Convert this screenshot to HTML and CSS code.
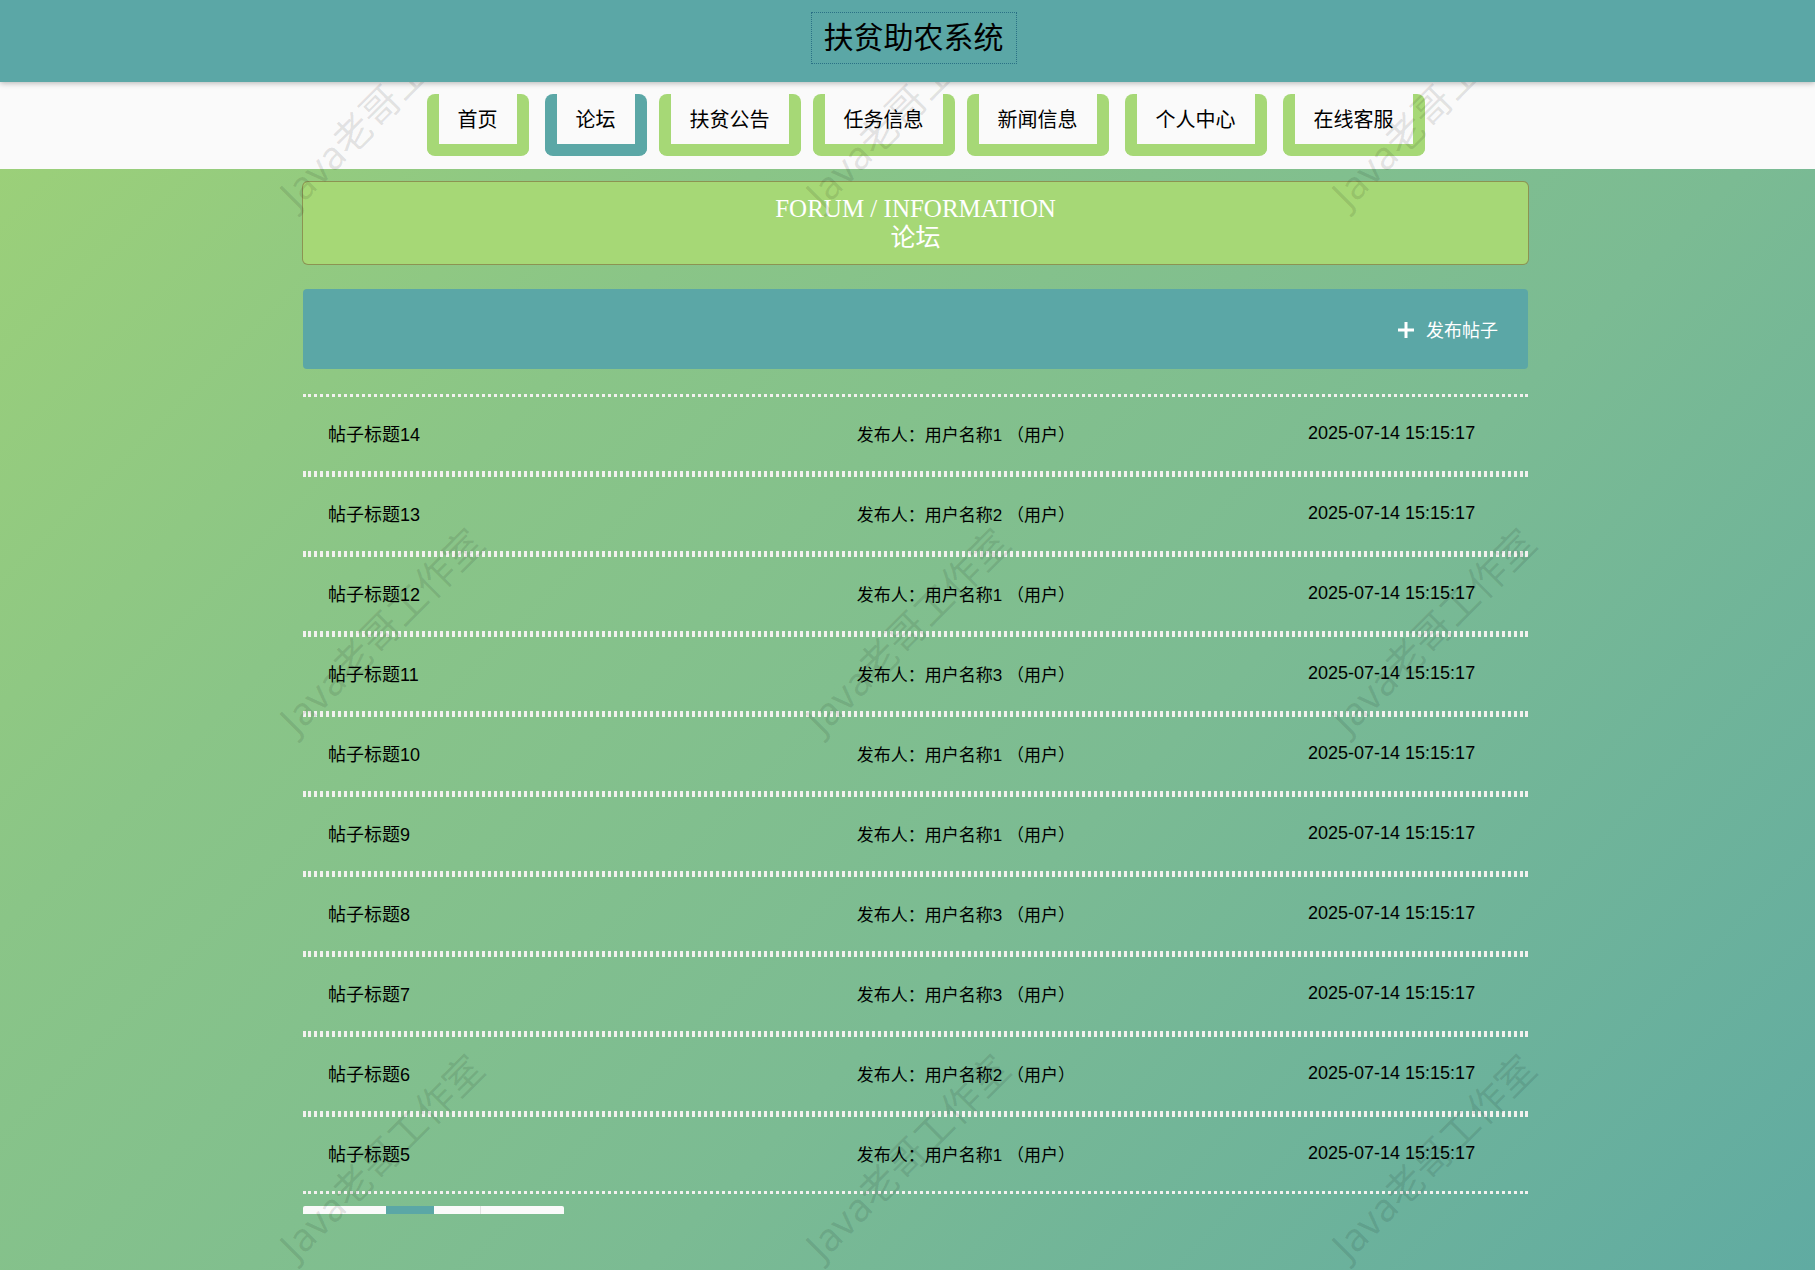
FILE: index.html
```html
<!DOCTYPE html>
<html lang="zh-CN">
<head>
    <meta charset="UTF-8">
    <meta name="viewport" content="width=device-width, initial-scale=1.0">
    <title>论坛</title>
    <link rel="stylesheet" href="styles.css">
</head>
<body>
    <header class="header">
        <h1>扶贫助农系统</h1>
    </header>
    <nav class="navbar">
        <a href="#">首页</a>
        <a href="#" class="active spaced">论坛</a>
        <a href="#">扶贫公告</a>
        <a href="#">任务信息</a>
        <a href="#">新闻信息</a>
        <a href="#" class="spaced">个人中心</a>
        <a href="#" class="spaced">在线客服</a>
    </nav>

    <main class="container">
        <div class="banner">
            <h2>FORUM / INFORMATION<br>论坛</h2>
        </div>

        <div class="toolbar">
            <button type="button" class="btn-add">
                <svg width="18" height="20" viewBox="0 0 18 20" aria-hidden="true">
                    <path d="M10 3v16M2 11h16" fill="none" stroke="currentColor" stroke-width="3"/>
                </svg>
                发布帖子
            </button>
        </div>

        <div class="forum-list" id="forumList"></div>

        <div class="pager">
            <button type="button" class="prev" aria-label="上一页"></button>
            <button type="button" class="current" aria-label="1"></button>
            <button type="button" aria-label="2"></button>
            <button type="button" class="next" aria-label="下一页"></button>
        </div>
    </main>

    <div class="watermark" id="watermark" aria-hidden="true"></div>

    <script>
        const posts = [
            { title: "帖子标题14", user: "用户名称1" },
            { title: "帖子标题13", user: "用户名称2" },
            { title: "帖子标题12", user: "用户名称1" },
            { title: "帖子标题11", user: "用户名称3" },
            { title: "帖子标题10", user: "用户名称1" },
            { title: "帖子标题9", user: "用户名称1" },
            { title: "帖子标题8", user: "用户名称3" },
            { title: "帖子标题7", user: "用户名称3" },
            { title: "帖子标题6", user: "用户名称2" },
            { title: "帖子标题5", user: "用户名称1" }
        ];

        const list = document.getElementById('forumList');
        posts.forEach(post => {
            const item = document.createElement('a');
            item.className = 'forum-item';
            item.href = '#';
            item.innerHTML = `
                <span class="title">${post.title}</span>
                <span class="user">发布人：${post.user} （用户）</span>
                <time class="date">2025-07-14 15:15:17</time>`;
            list.appendChild(item);
        });

        // 水印 3 x 3
        const watermark = document.getElementById('watermark');
        for (let i = 0; i < 9; i++) {
            const mark = document.createElement('span');
            mark.textContent = 'Java老哥工作室';
            watermark.appendChild(mark);
        }
    </script>
</body>
</html>
```
FILE: styles.css
```css
* {
    box-sizing: border-box;
}
body {
    position: relative;
    margin: 0;
    min-height: 100vh;
    font-family: "Liberation Sans", "Noto Sans CJK SC", sans-serif;
    color: #000;
    background: linear-gradient(135deg, #9fd276 0%, #8ac587 30%, #7bbb93 62%, #60aba2 100%);
}
a {
    color: inherit;
    text-decoration: none;
}
.header {
    position: relative;
    z-index: 3;
    display: flex;
    justify-content: center;
    align-items: flex-start;
    height: 82px;
    padding: 12px 0 0 12px;
    background: #5ba7a6;
    box-shadow: 0 1px 6px rgba(0, 0, 0, 0.3);
}
.header h1 {
    margin: 0;
    padding: 0 12px;
    border: 1px dotted #2a7186;
    font-size: 30px;
    font-weight: 400;
    line-height: 50px;
}
.navbar {
    display: flex;
    justify-content: center;
    gap: 12px;
    padding: 12px 0 13px 36px;
    background: #fafafa;
}
.navbar a {
    height: 62px;
    padding: 0 19px;
    border: 12px solid #a6d876;
    border-top: 0;
    border-radius: 8px;
    font-size: 20px;
    line-height: 52px;
}
.navbar a.active {
    border-color: #5ba7a6;
}
.navbar .spaced {
    margin-left: 4px;
}
.container {
    width: 68%;
    max-width: 1225px;
    margin: 0 auto;
    padding-top: 13px;
    position: relative;
    left: 8px;
}
.banner {
    padding: 12px 0;
    border-radius: 5px;
    background: #a6d876;
    box-shadow: 0 0 0 1px #8c9352;
}
.banner h2 {
    margin: 0;
    color: #fff;
    font-family: "Liberation Serif", "Noto Sans CJK SC", serif;
    font-size: 25px;
    font-weight: 400;
    line-height: 29px;
    text-align: center;
}
.toolbar {
    display: flex;
    justify-content: flex-end;
    align-items: center;
    height: 80px;
    margin: 25px 0;
    padding: 0 30px;
    border-radius: 4px;
    background: #5ba7a6;
}
.btn-add {
    display: flex;
    align-items: center;
    gap: 12px;
    padding: 0;
    border: 0;
    background: none;
    color: #fff;
    font-family: inherit;
    font-size: 18px;
    cursor: pointer;
}
.forum-item {
    display: grid;
    grid-template-columns: 45% 1fr 195px;
    align-items: center;
    height: 80px;
    padding: 0 25px 2px;
    border-top: 3px dotted #f3f1ef;
    border-bottom: 3px dotted #f3f1ef;
    font-size: 18px;
}
.forum-item .user {
    font-size: 17px;
}
.pager {
    display: flex;
    margin-top: 12px;
}
.pager button {
    width: 46px;
    height: 8px;
    padding: 0;
    border: 0;
    background: #fafafa;
}
.pager .prev {
    width: 83px;
    border-radius: 2px 0 0 0;
}
.pager .current {
    width: 48px;
    background: #5ba7a6;
}
.pager .next {
    width: 84px;
    border-left: 1px solid #e2e2e2;
    border-radius: 0 2px 0 0;
}
.watermark {
    position: absolute;
    inset: 0;
    z-index: 2;
    display: grid;
    grid-template-columns: repeat(3, 526px);
    grid-auto-rows: 526px;
    place-content: center;
    place-items: center;
    padding: 0 4px 12px 0;
    overflow: hidden;
    pointer-events: none;
    color: rgba(0, 0, 0, 0.1);
    font-family: "Noto Sans", "Noto Sans CJK SC", sans-serif;
    font-size: 39px;
}
.watermark span {
    transform: rotate(-45deg);
    white-space: nowrap;
}
```
